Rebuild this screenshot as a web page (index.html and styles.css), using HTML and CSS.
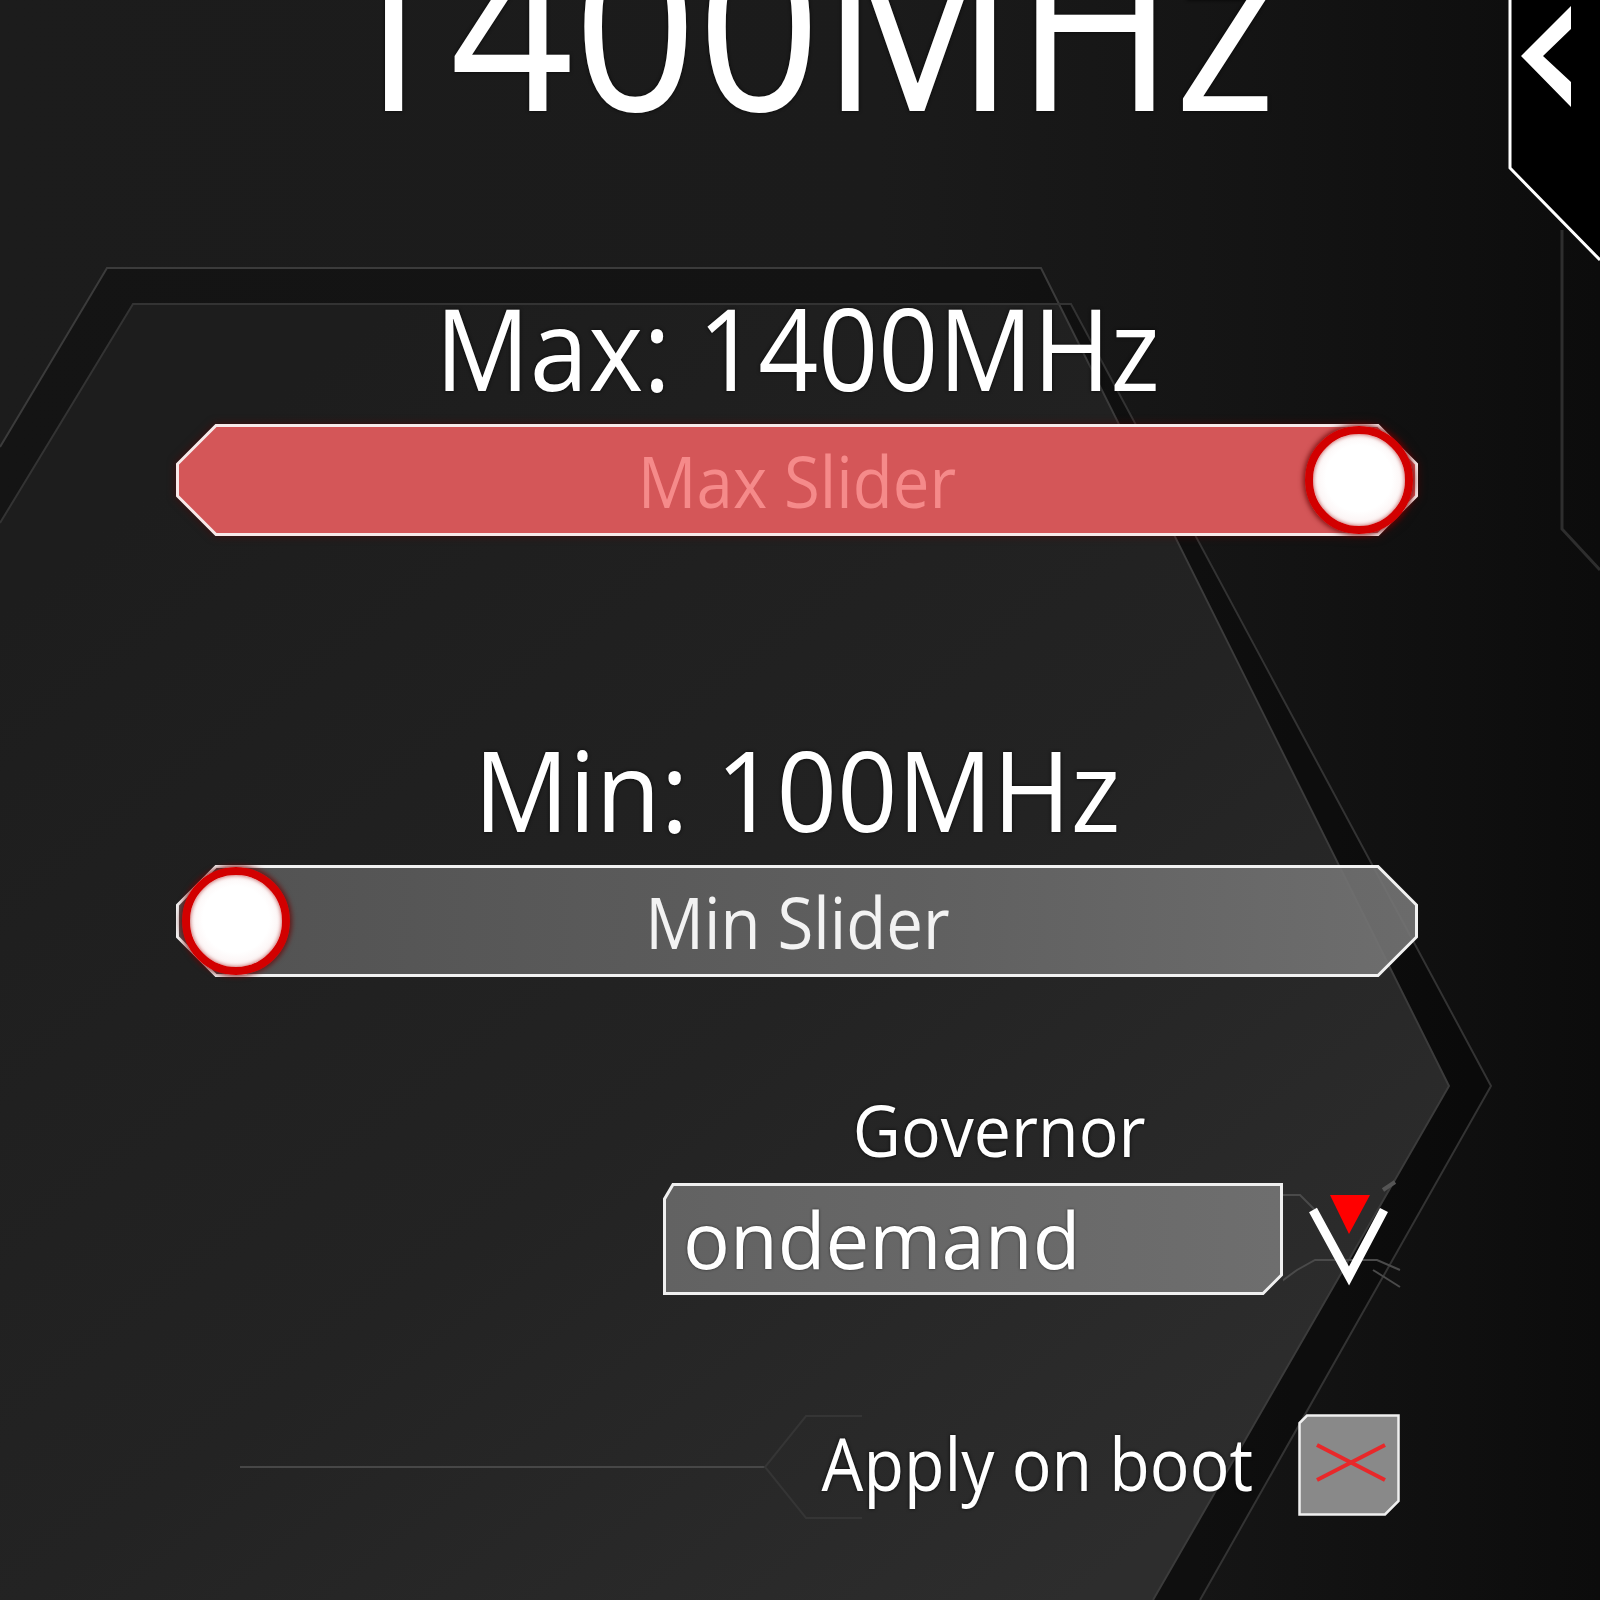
FILE: index.html
```html
<!DOCTYPE html>
<html>
<head>
<meta charset="utf-8">
<title>CPU Frequency</title>
<link rel="stylesheet" href="styles.css">
</head>
<body>
<div class="screen">
  <svg class="backdrop" width="1600" height="1600" viewBox="0 0 1600 1600">
    <defs>
      <linearGradient id="innerFill" x1="0.1" y1="0.15" x2="0.8" y2="0.95">
        <stop offset="0" stop-color="#1d1d1d"/>
        <stop offset="0.55" stop-color="#232323"/>
        <stop offset="1" stop-color="#2d2d2d"/>
      </linearGradient>
    </defs>
    <polygon points="0,447 107,268 1041,268 1059,304 1071,304 1491,1086 1200,1600 0,1600" fill="rgba(0,0,0,0.28)"/>
    <polygon points="0,523 133,304 1059,304 1449,1086 1153,1600 0,1600" fill="url(#innerFill)"/>
    <polyline points="0,447 107,268 1041,268 1449,1086 1153,1600" fill="none" stroke="#3b3b3b" stroke-width="2"/>
    <polyline points="0,523 133,304 1071,304 1491,1086 1200,1600" fill="none" stroke="#333333" stroke-width="2"/>
    <polyline points="1562,230 1562,529 1600,570" fill="none" stroke="#2e2e2e" stroke-width="3"/>
  </svg>

  <button class="side-tab" type="button" aria-label="Back">
    <svg width="92" height="262" viewBox="0 0 92 262">
      <polygon points="2,0 2,168 92,260 92,0" fill="#000"/>
      <polyline points="2,0 2,168 92,260" fill="none" stroke="#fff" stroke-width="3"/>
      <polygon points="63,6 63,29 35,56 63,82 63,107 13,56" fill="#fff"/>
    </svg>
  </button>

  <main class="panel">
    <h1 class="title"><span class="cond">1400MHz</span></h1>

    <div class="freq-label label-max"><span class="cond-max">Max: 1400MHz</span></div>
    <div class="slider slider-max">
      <svg class="slider-shape" viewBox="0 0 1242 112" preserveAspectRatio="none">
        <polygon points="40,1.5 1202,1.5 1240.5,40 1240.5,72 1202,110.5 40,110.5 1.5,72 1.5,40" fill="#d45658" stroke="#f7e9e9" stroke-width="3"/>
      </svg>
      <span class="slider-text text-max"><span class="cond">Max Slider</span></span>
      <span class="knob knob-end"></span>
    </div>

    <div class="freq-label label-min"><span class="cond-min">Min: 100MHz</span></div>
    <div class="slider slider-min">
      <svg class="slider-shape" viewBox="0 0 1242 112" preserveAspectRatio="none">
        <defs>
          <linearGradient id="minFill" x1="0" y1="0" x2="1" y2="0">
            <stop offset="0" stop-color="#575757"/>
            <stop offset="0.6" stop-color="#666666"/>
            <stop offset="1" stop-color="#757575"/>
          </linearGradient>
        </defs>
        <polygon points="40,1.5 1202,1.5 1240.5,40 1240.5,72 1202,110.5 40,110.5 1.5,72 1.5,40" fill="url(#minFill)" fill-opacity="0.9" stroke="#f2f2f2" stroke-width="3"/>
      </svg>
      <span class="slider-text text-min"><span class="cond">Min Slider</span></span>
      <span class="knob knob-start"></span>
    </div>

    <section class="governor">
      <div class="gov-label"><span class="cond">Governor</span></div>
      <div class="gov-row">
        <div class="gov-box">
          <svg class="gov-shape" viewBox="0 0 620 112" preserveAspectRatio="none">
            <defs>
              <linearGradient id="govFill" x1="0" y1="0" x2="1" y2="0">
                <stop offset="0" stop-color="#626262"/>
                <stop offset="1" stop-color="#6e6e6e"/>
              </linearGradient>
            </defs>
            <polygon points="10,1.5 618.5,1.5 618.5,92 600,110.5 1.5,110.5 1.5,16" fill="url(#govFill)" stroke="#f0f0f0" stroke-width="3"/>
          </svg>
          <span class="gov-value">ondemand</span>
        </div>
        <svg class="gov-arrow" width="127" height="125" viewBox="0 0 127 125">
          <polyline points="0,23 17,23 32,38" fill="none" stroke="#4a4a4a" stroke-width="2"/>
          <polyline points="-8,114 14,98 32,88 94,88 117,98" fill="none" stroke="#4a4a4a" stroke-width="2"/>
          <polyline points="90,98 117,115" fill="none" stroke="#4a4a4a" stroke-width="2"/>
          <polyline points="100,18 112,10" fill="none" stroke="#555555" stroke-width="4"/>
          <polygon points="47,23 87,23 66,62" fill="#ff0000"/>
          <polyline points="30,38 66,104 101,38" fill="none" stroke="#ffffff" stroke-width="9"/>
        </svg>
      </div>
    </section>

    <div class="boot-row">
      <svg class="boot-deco" width="700" height="110" viewBox="0 0 700 110">
        <line x1="64" y1="54" x2="589" y2="54" stroke="#474747" stroke-width="2"/>
        <polyline points="686,3 630,3 589,54 630,105 686,105" fill="none" stroke="#353535" stroke-width="2"/>
      </svg>
      <span class="boot-label"><span class="cond-boot">Apply on boot</span></span>
      <span class="checkbox" role="checkbox" aria-checked="false">
        <svg width="102" height="102" viewBox="0 0 102 102">
          <polygon points="9,1.5 100.5,1.5 100.5,87 87,100.5 1.5,100.5 1.5,9" fill="#898989" stroke="#f0f0f0" stroke-width="2.5"/>
          <line x1="19" y1="31" x2="87" y2="66" stroke="#e8282a" stroke-width="4"/>
          <line x1="19" y1="66" x2="87" y2="31" stroke="#e8282a" stroke-width="4"/>
        </svg>
      </span>
    </div>
  </main>
</div>
</body>
</html>
```

FILE: styles.css
```css
html, body {
  margin: 0;
  padding: 0;
}

body {
  width: 1600px;
  height: 1600px;
  overflow: hidden;
  background: #151515;
  font-family: "Open Sans", "Noto Sans", "DejaVu Sans", sans-serif;
  color: #ffffff;
}

.screen {
  position: relative;
  width: 1600px;
  height: 1600px;
  overflow: hidden;
  background: linear-gradient(90deg, #1c1c1c 0%, #1b1b1b 55%, #141414 78%, #0c0c0c 100%);
}

.backdrop {
  position: absolute;
  left: 0;
  top: 0;
}

.side-tab {
  position: absolute;
  top: 0;
  right: 0;
  width: 92px;
  height: 262px;
  padding: 0;
  border: 0;
  background: transparent;
}

.side-tab svg {
  display: block;
}

.panel {
  position: relative;
  display: flex;
  flex-direction: column;
  padding: 0 182px 0 176px;
}

.cond,
.cond-max,
.cond-min {
  display: inline-block;
  white-space: nowrap;
  transform: scaleX(0.92);
}

.cond-max {
  transform: scaleX(0.93);
}

.cond-min {
  transform: scaleX(0.945);
}

.title {
  margin: -97px 0 0 0;
  padding-left: 8px;
  font-size: 235px;
  font-weight: 400;
  line-height: 1;
  text-align: center;
  text-shadow: 0 0 4px rgba(0, 0, 0, 0.8);
}

.freq-label {
  font-size: 113px;
  line-height: 1;
  text-align: center;
  text-shadow: 0 0 4px rgba(0, 0, 0, 0.8);
}

.label-max {
  margin-top: 153px;
}

.label-min {
  margin-top: 197px;
  font-size: 112px;
}

.slider {
  position: relative;
  height: 112px;
  display: flex;
  align-items: center;
  justify-content: center;
}

.slider-max {
  margin-top: 20px;
  filter: drop-shadow(0 0 4px rgba(90, 0, 0, 0.6));
}

.slider-min {
  margin-top: 20px;
}

.slider-shape {
  position: absolute;
  left: 0;
  top: 0;
  width: 100%;
  height: 100%;
}

.slider-text {
  position: relative;
  font-size: 71px;
  line-height: 1;
}

.text-max {
  color: #f58a8a;
}

.text-min {
  color: #f2f2f2;
}

.knob {
  position: absolute;
  box-sizing: border-box;
  width: 108px;
  height: 108px;
  border-radius: 50%;
  border: 8px solid #d20000;
  background: radial-gradient(circle at 50% 48%, #ffffff 0%, #ffffff 50%, #fbf1f1 72%, #f3d6d6 100%);
  box-shadow: 0 0 5px 2px rgba(110, 0, 0, 0.75), inset 0 0 4px rgba(160, 0, 0, 0.7);
}

.knob-end {
  right: 5px;
  top: 2px;
}

.knob-start {
  left: 6px;
  top: 2px;
}

.governor {
  align-self: flex-start;
  margin-left: 487px;
  margin-top: 116px;
  width: 747px;
  display: flex;
  flex-direction: column;
}

.gov-label {
  font-size: 72px;
  line-height: 1;
  text-align: center;
  padding-right: 75px;
  text-shadow: 0 0 4px rgba(0, 0, 0, 0.8);
}

.gov-row {
  margin-top: 15px;
  display: flex;
  align-items: center;
}

.gov-box {
  position: relative;
  width: 620px;
  height: 112px;
  display: flex;
  align-items: center;
  flex-shrink: 0;
}

.gov-shape {
  position: absolute;
  left: 0;
  top: 0;
  width: 100%;
  height: 100%;
}

.gov-value {
  position: relative;
  padding-left: 20px;
  font-size: 78px;
  line-height: 1;
  text-shadow: 0 0 3px rgba(0, 0, 0, 0.6);
}

.gov-arrow {
  display: block;
  flex-shrink: 0;
  margin-top: -8px;
}

.boot-row {
  position: relative;
  margin-top: 118px;
  height: 100px;
  display: flex;
  align-items: center;
  justify-content: flex-end;
  padding-right: 18px;
}

.boot-deco {
  position: absolute;
  left: 0;
  top: -2px;
}

.boot-label {
  position: relative;
  top: -2px;
  font-size: 74px;
  line-height: 1;
  margin-right: 45px;
  text-shadow: 0 0 4px rgba(0, 0, 0, 0.8);
}

.cond-boot {
  display: inline-block;
  white-space: nowrap;
  transform: scaleX(0.895);
  transform-origin: right center;
}

.checkbox {
  display: block;
  width: 102px;
  height: 102px;
}

.checkbox svg {
  display: block;
}
```
